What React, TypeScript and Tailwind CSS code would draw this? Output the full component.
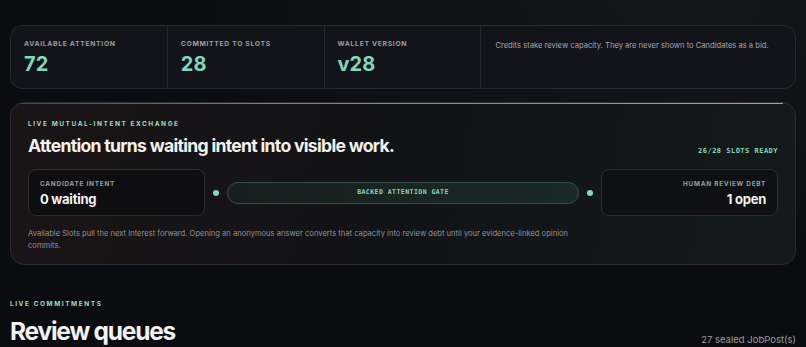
import React from "react";

const sans = { fontFamily: "Inter, 'Liberation Sans', sans-serif" };
const mono = { fontFamily: "'DejaVu Sans Mono', 'Liberation Mono', monospace" };

function Stat({ label, value }: { label: string; value: string }) {
  return (
    <div className="border-r border-[#23262c] px-[13px] pt-[14px] pb-[13px]">
      <div className="text-[6.8px] font-bold uppercase tracking-[0.1em] text-[#9b9ea5] leading-[8px]">{label}</div>
      <div className="mt-[5px] text-[20px] font-bold leading-[22px] text-[#7fd8b8]">{value}</div>
    </div>
  );
}

export default function App() {
  return (
    <div
      className="min-h-[347px] w-[806px] overflow-hidden bg-[radial-gradient(ellipse_at_85%_0%,#15181b_0%,#0b0c10_55%)] px-[10px] pt-[25px]"
      style={sans}
    >
      <div className="grid grid-cols-5 overflow-hidden rounded-[12px] border border-[#262930] bg-[#131419]">
        <Stat label="Available attention" value="72" />
        <Stat label="Committed to slots" value="28" />
        <Stat label="Wallet version" value="v28" />
        <div className="col-span-2 px-[14px] pt-[15px] text-[7.6px] leading-[10px] text-[#a3a6ad]">
          Credits stake review capacity. They are never shown to Candidates as a bid.
        </div>
      </div>

      <div className="relative mt-[13px] overflow-hidden rounded-[14px] border border-[#2a2d31] bg-[linear-gradient(100deg,#1a1517_0%,#121316_50%,#141a1a_100%)] px-[17px] pt-[17px] pb-[12px]">
        <div className="absolute left-[4px] right-[12px] top-0 h-px bg-[linear-gradient(90deg,rgba(95,200,165,0.3)_0%,rgba(95,200,165,0.7)_30%,rgba(95,210,172,0.95)_100%)]" />
        <div className="text-[6.5px] font-bold uppercase tracking-[0.24em] leading-[8px] text-[#9edcc6]">
          Live mutual-intent exchange
        </div>
        <div className="mt-[7px] flex items-end justify-between">
          <div className="text-[17.6px] font-bold leading-[22px] tracking-[-0.04em] text-[#f2f1ed]">
            Attention turns waiting intent into visible work.
          </div>
          <div className="mb-[1px] text-[7px] font-bold tracking-[0.07em] leading-[9px] text-[#8ed2b9]" style={mono}>
            26/28 SLOTS READY
          </div>
        </div>

        <div className="mt-[12px] grid grid-cols-[177px_auto_1fr_auto_177px] items-center gap-x-[8px]">
          <div className="h-[47px] rounded-[8px] border border-[#2b2d32] bg-[#0e0e11] px-[11px] pt-[10px]">
            <div className="text-[6.4px] font-bold uppercase tracking-[0.12em] leading-[8px] text-[#9c9ea4]">Candidate intent</div>
            <div className="mt-[3px] text-[13px] font-bold leading-[16px] tracking-[-0.02em] text-[#f4f3ef]">0 waiting</div>
          </div>
          <div className="h-[6px] w-[6px] rounded-full bg-[#7ddcbf]" />
          <div className="flex h-[22px] items-center justify-center rounded-full border border-[#34504a] bg-[linear-gradient(90deg,#17201e,#1a2a27)] text-[6.5px] font-bold tracking-[0.07em] text-[#8fd8bd]" style={mono}>
            BACKED ATTENTION GATE
          </div>
          <div className="h-[6px] w-[6px] rounded-full bg-[#7ddcbf]" />
          <div className="h-[47px] rounded-[8px] border border-[#2a2e31] bg-[#0e1012] px-[11px] pt-[10px] text-right">
            <div className="text-[6.4px] font-bold uppercase tracking-[0.12em] leading-[8px] text-[#9c9ea4]">Human review debt</div>
            <div className="mt-[3px] text-[13px] font-bold leading-[16px] tracking-[-0.02em] text-[#f4f3ef]">1 open</div>
          </div>
        </div>

        <p className="mt-[12px] max-w-[550px] text-[7.6px] leading-[12px] text-[#8e9096]">
          Available Slots pull the next Interest forward. Opening an anonymous answer converts that capacity into review debt until your evidence-linked opinion commits.
        </p>
      </div>

      <div className="mt-[35px] text-[6.5px] font-bold uppercase tracking-[0.24em] leading-[8px] text-[#9edcc6]">
        Live commitments
      </div>
      <div className="mt-[8px] flex items-end justify-between">
        <div className="text-[24.5px] font-bold leading-[30px] tracking-[-0.05em] text-[#f2f1ed]">Review queues</div>
        <div className="mb-[-1px] text-[9.5px] text-[#9c9ca1]">27 sealed JobPost(s)</div>
      </div>
    </div>
  );
}
